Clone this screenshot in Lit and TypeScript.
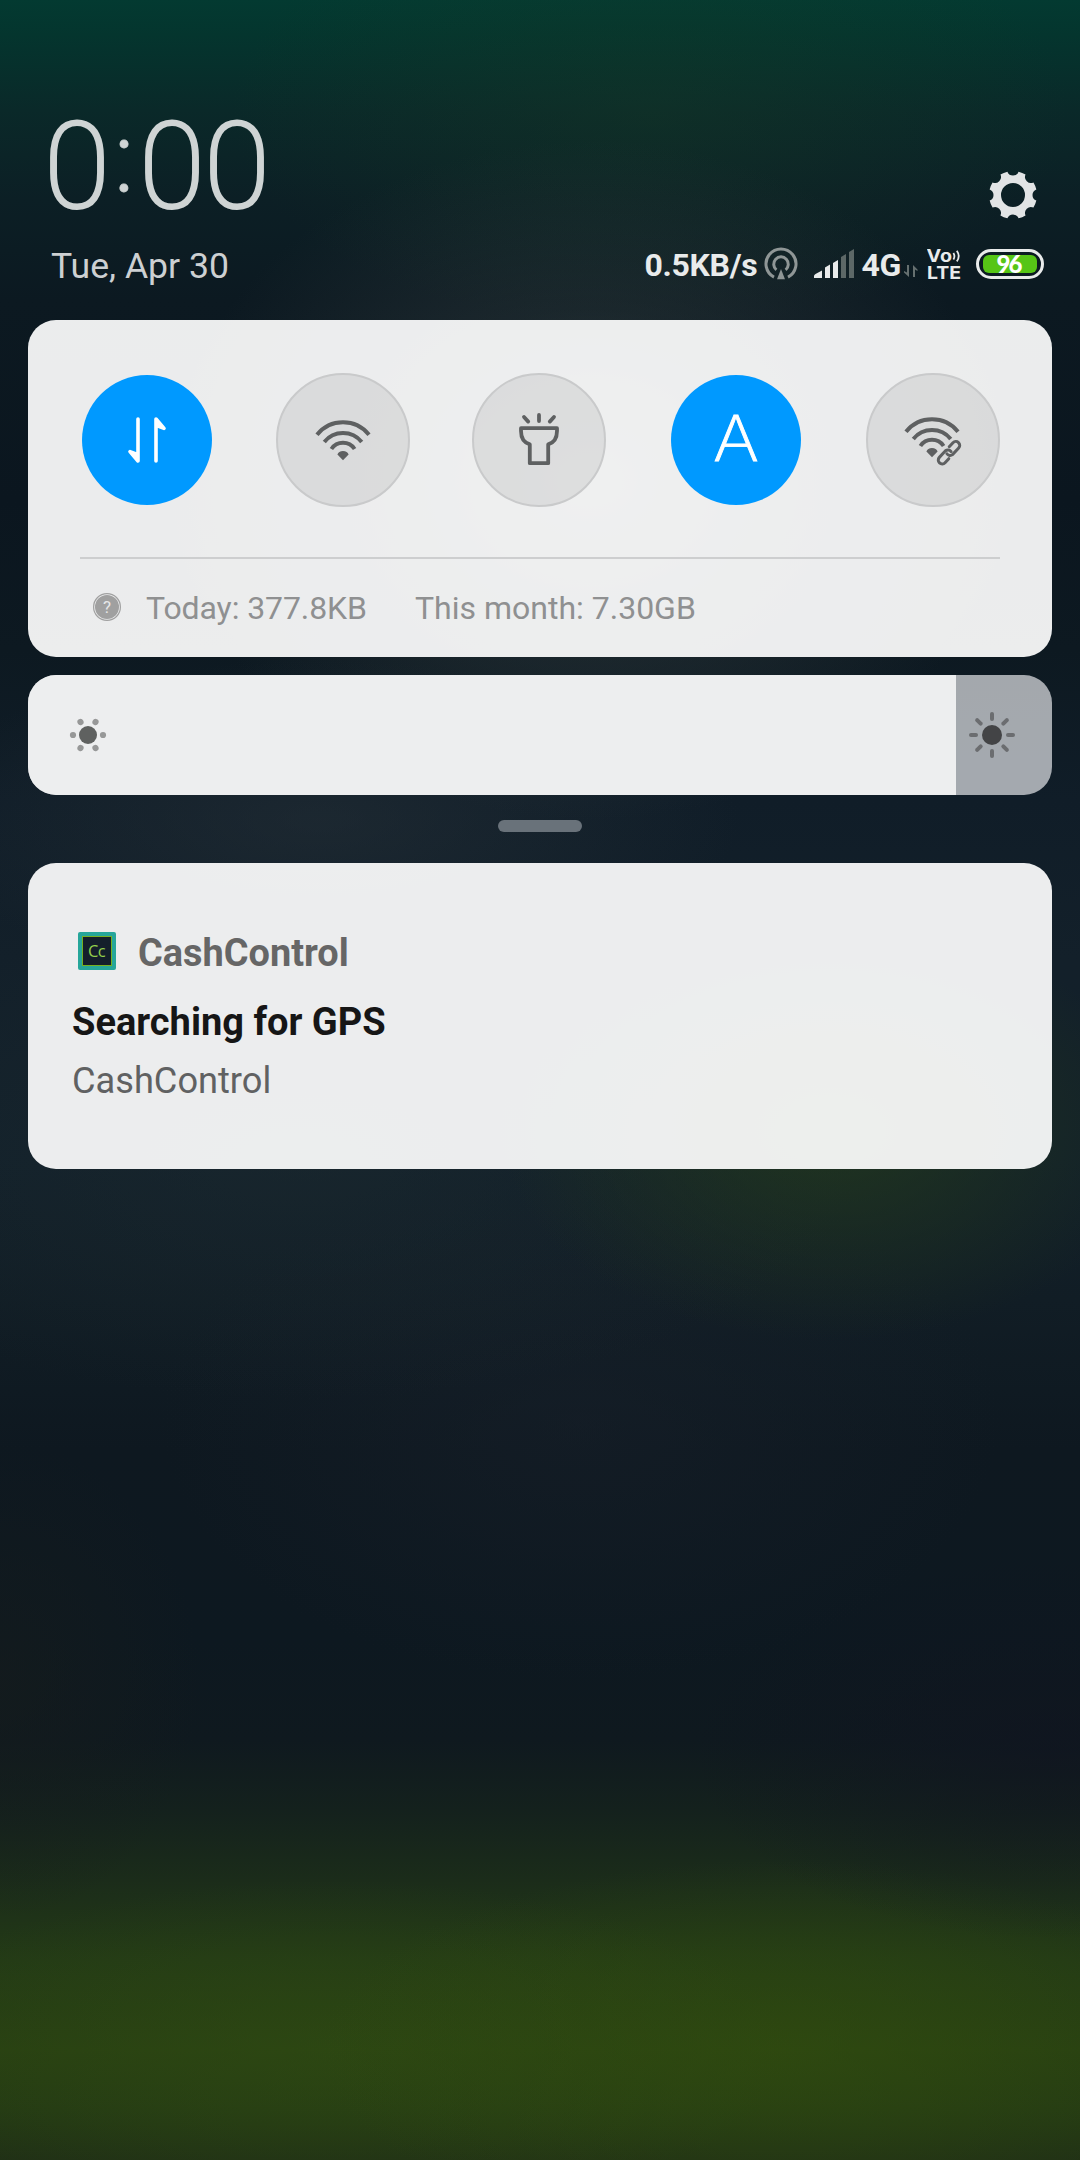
import { LitElement, html, css, svg } from "lit";
import { customElement, property } from "lit/decorators.js";

/** Outline of a cog with eight scalloped notches and a round hole. */
function gearPath(r: number, hole: number, halfNotch: number, notchR: number): string {
  const at = (deg: number) => {
    const a = ((deg - 90) * Math.PI) / 180;
    return `${(r * Math.cos(a)).toFixed(2)} ${(r * Math.sin(a)).toFixed(2)}`;
  };
  let d = `M${at(halfNotch)}`;
  for (let k = 0; k < 8; k++) {
    const next = (k + 1) * 45;
    d += `A${r} ${r} 0 0 1 ${at(next - halfNotch)}`;
    d += `A${notchR} ${notchR} 0 0 0 ${at(next + halfNotch)}`;
  }
  return `${d}ZM0 ${-hole}A${hole} ${hole} 0 1 0 0 ${hole}A${hole} ${hole} 0 1 0 0 ${-hole}Z`;
}

const wifi = svg`
  <g fill="none" stroke="#5e6061" stroke-width="4">
    <path d="M-26 -5.2A33.3 33.3 0 0 1 26 -5.2"/>
    <path d="M-18.7 2A24 24 0 0 1 18.7 2"/>
    <path d="M-11.6 9A14 14 0 0 1 11.6 9"/>
  </g>
  <path d="M-5.6 14.6Q-4.4 11.2 0 11Q4.4 11.2 5.6 14.6L0 20.2Z" fill="#5e6061"/>`;

const glyphs: Record<string, unknown> = {
  data: svg`<g fill="#fff" stroke="#fff" stroke-width="3.6" stroke-linejoin="round" stroke-linecap="round">
    <path d="M-9 -21V21L-17 11.6L-9 14.6"/><path d="M9 21V-21L17 -11.6L9 -14.6"/></g>`,
  wifi,
  torch: svg`<g fill="none" stroke="#5e6061" stroke-width="3.8" stroke-linejoin="round" stroke-linecap="round">
    <path d="M-18 -11.8H18V-9C18 -1.5 14.5 2.8 9.2 4.4V23.2H-9.2V4.4C-14.5 2.8 -18 -1.5 -18 -9Z"/>
    <path d="M0 -25V-19M-15 -23L-10.8 -18.4M15 -23L10.8 -18.4"/></g>`,
  auto: svg`<text class="auto" x="-23" y="20.5" textLength="46" lengthAdjust="spacingAndGlyphs">A</text>`,
  link: svg`<g transform="translate(-1 -3)">${wifi}</g>
    <g transform="translate(16 12.7) rotate(-47)" fill="none">
      <path d="M-14 -3.9H14V3.9H-14Z" stroke="#dadcdb" stroke-width="4"/>
      <g stroke="#5e6061" stroke-width="3" stroke-linecap="round">
        <path d="M-4.5 3.9H-10A3.9 3.9 0 0 1 -10 -3.9H-1A3.9 3.9 0 0 1 2.2 0.8"/>
        <path d="M4.5 -3.9H10A3.9 3.9 0 0 1 10 3.9H1A3.9 3.9 0 0 1 -2.2 -0.8"/>
      </g>
    </g>`,
};

@customElement("quick-toggle")
export class QuickToggle extends LitElement {
  @property() icon = "";
  @property({ type: Boolean }) on = false;

  static styles = css`
    :host { display: flex; align-items: center; justify-content: center; width: 134px; height: 134px; }
    .disc { box-sizing: border-box; width: 134px; height: 134px; border-radius: 50%;
      background: rgba(0, 0, 0, 0.075); border: 2px solid #c9cacb; display: flex; align-items: center; justify-content: center; }
    .disc.on { width: 130px; height: 130px; border: 0; background: #0099ff; }
    .auto { font: 200 63px Inter, sans-serif; fill: #fff; stroke: #fff; stroke-width: 0.8; }
  `;

  render() {
    return html`<div class="disc ${this.on ? "on" : ""}">
      <svg width="90" height="90" viewBox="-45 -45 90 90">${glyphs[this.icon]}</svg>
    </div>`;
  }
}

@customElement("status-icons")
export class StatusIcons extends LitElement {
  static styles = css`
    :host { display: flex; align-items: center; height: 40px; color: #e9ebeb; font: 700 32px/40px Roboto, sans-serif; }
    svg { display: block; }
    .rate, .net { padding-top: 2px; }
    .rate { letter-spacing: -0.3px; }
    .hotspot { margin-left: 7px; }
    .signal { margin-left: 16px; }
    .net { margin-left: 7px; letter-spacing: -0.3px; }
    .arrows { margin-left: 3px; }
    .volte { margin-left: 9px; }
    .volte text { font: 700 17.5px Inter, sans-serif; fill: #e9ebeb; }
    .battery { margin-left: 14px; box-sizing: border-box; width: 68px; height: 30px; border: 3px solid #e9ebeb;
      border-radius: 15px; padding: 3px 5px; }
    .charge { height: 18px; width: 54px; margin-left: -1px; border-radius: 6px; background: #56c516; color: #fff;
      display: flex; align-items: center; justify-content: center; font: 900 24px/18px Lato, sans-serif; letter-spacing: -2px; }
    .charge span { margin-left: -3px; }
  `;

  render() {
    return html`
      <span class="rate">0.5KB/s</span>
      <svg class="hotspot" width="34" height="34" viewBox="-17 -17 34 34" fill="none" stroke="#8f9696" stroke-width="3">
        <path d="M-7 13.2A15 15 0 1 1 7 13.2"/><path d="M-4.6 5.8A7.3 7.3 0 1 1 4.6 5.8"/>
        <path d="M0 5L4 15.2H-4Z" fill="#8f9696" stroke="none"/>
      </svg>
      <svg class="signal" width="40" height="32" viewBox="0 0 40 32" fill="#e9ebeb">
        <path d="M0 30V28Q0 26.8 1.5 26L8 22.5V30Z"/><path d="M11 30V19.5L16 16.6V30Z"/>
        <path d="M19 30V15L24 12V30Z"/>
        <path d="M27 30V9L32 6V30Z" fill="#5d6867"/><path d="M35 30V4L40 1V30Z" fill="#5d6867"/>
      </svg>
      <span class="net">4G</span>
      <svg class="arrows" width="14" height="32" viewBox="0 0 14 32" fill="#667070">
        <path d="M3 17H5V29L0 24.6V23L3 24.5Z"/><path d="M11 29H9V17L13.5 21.4V23L11 21.5Z"/>
      </svg>
      <svg class="volte" width="35" height="42" viewBox="0 0 35 42">
        <text x="-0.5" y="18.6" textLength="25.5" lengthAdjust="spacingAndGlyphs">Vo</text>
        <text x="0" y="35.6" textLength="34" lengthAdjust="spacingAndGlyphs">LTE</text>
        <path d="M26.4 10Q28.4 13.2 26.4 16.5M29.8 7.8Q33.6 13.2 29.8 18.4" fill="none" stroke="#e9ebeb" stroke-width="1.8"/>
      </svg>
      <div class="battery"><div class="charge"><span>96</span></div></div>
    `;
  }
}

@customElement("app-root")
export class AppRoot extends LitElement {
  static styles = css`
    :host { display: block; font-family: Roboto, sans-serif; }
    .screen {
      box-sizing: border-box; width: 1080px; height: 2160px; overflow: hidden; display: flex; flex-direction: column;
      background:
        radial-gradient(ellipse 420px 340px at 590px 480px, rgba(82, 92, 92, 0.62), rgba(60, 70, 70, 0.3) 50%, transparent),
        radial-gradient(ellipse 420px 220px at 650px 110px, rgba(24, 60, 38, 0.35), transparent),
        radial-gradient(ellipse 420px 160px at 320px 820px, rgba(44, 54, 60, 0.42), transparent),
        radial-gradient(ellipse 330px 210px at 830px 1130px, rgba(36, 58, 28, 0.78), transparent),
        radial-gradient(ellipse 560px 240px at 300px 1160px, rgba(32, 46, 50, 0.4), transparent),
        radial-gradient(ellipse 420px 260px at 580px 1420px, rgba(24, 32, 42, 0.5), transparent),
        radial-gradient(ellipse 200px 240px at 0 1680px, rgba(22, 28, 28, 0.6), transparent),
        radial-gradient(ellipse 360px 190px at 1050px 1750px, rgba(16, 20, 32, 0.65), transparent),
        radial-gradient(ellipse 460px 190px at 780px 2050px, rgba(50, 78, 14, 0.6), transparent),
        radial-gradient(ellipse 460px 170px at 330px 2050px, rgba(48, 76, 18, 0.55), transparent),
        linear-gradient(#033a31 0, #04352e 35px, #0a2929 110px, #0c1f25 200px, #0c1921 300px, #0b161f 500px, #0d1921 650px,
          #101d28 800px, #13202a 960px, #12202a 1160px, #111d25 1300px, #0e1820 1450px, #0d1820 1640px, #0f191f 1740px,
          #14211d 1810px, #1b2c1a 1880px, #233a16 1960px, #284012 2050px, #243a14 2110px, #203016 2160px);
    }
    .header { box-sizing: border-box; height: 320px; padding: 97px 36px 0 51px; }
    .top { display: flex; justify-content: space-between; height: 147px; }
    .clock { display: flex; align-items: baseline; height: 140px; line-height: 140px; font-size: 120px; font-weight: 200;
      color: #cfd4d4; margin-left: -7px; -webkit-text-stroke: 2.2px #cfd4d4; }
    .clock span { display: block; width: 65px; text-align: center; }
    .clock .colon { width: 30px; font-size: 98px; font-weight: 300; line-height: 100px; position: relative; top: -16px;
      -webkit-text-stroke: 0.8px #cfd4d4; }
    .gear { margin: 74px 7px 0 0; width: 48px; height: 48px; }
    .under { display: flex; justify-content: space-between; height: 40px; }
    .date { font-size: 35.6px; line-height: 40px; padding-top: 2px; color: #cdd0d2; }
    .card { box-sizing: border-box; margin: 0 28px; border-radius: 28px; background: rgba(255, 255, 255, 0.92); }
    .panel { height: 337px; padding: 53px 52px 0; }
    .toggles { display: grid; grid-template-columns: 196px 196px 197px 197px 134px; height: 184px; }
    .usage { border-top: 2px solid #cdcecf; display: flex; align-items: center; height: 96px; padding-left: 12px;
      font-size: 32px; color: #8f9091; }
    .usage span { padding-top: 2px; }
    .usage text { font: 400 17px Roboto, sans-serif; fill: #e6e7e8; }
    .today { margin-left: 24px; width: 269px; letter-spacing: -0.1px; }
    .slider { margin-top: 18px; height: 120px; overflow: hidden; background: rgba(252, 252, 255, 0.63); display: flex; }
    .level { width: 928px; background: #edeeef; display: flex; align-items: center; padding-left: 41px; box-sizing: border-box; }
    .rest { flex: 1; display: flex; align-items: center; padding-left: 12px; }
    .grip { flex: none; align-self: center; width: 84px; height: 12px; border-radius: 6px; background: #69727a; margin: 25px 0 31px; }
    .note { height: 306px; padding: 65px 44px 0; }
    .app { display: flex; align-items: center; height: 48px; padding-left: 6px; font-size: 37.9px; font-weight: 700; color: #666; }
    .app span { padding-top: 2px; }
    .badge { box-sizing: border-box; width: 38px; height: 38px; margin: -2px 22px 0 0; border-radius: 2px; background: #26a69a;
      padding: 4px; }
    .badge div { box-sizing: border-box; height: 30px; border: 1px solid #76b021; background: #141f2b; color: #93d04c;
      font: 400 16.5px/27px "Open Sans", sans-serif; text-align: center; letter-spacing: -0.6px; padding-right: 1px; }
    .title { margin-top: 17px; font-size: 38px; line-height: 58px; font-weight: 700; color: #161616; }
    .body { font-size: 36.2px; line-height: 60px; color: #606162; }
  `;

  private toggles = [
    { icon: "data", on: true },
    { icon: "wifi", on: false },
    { icon: "torch", on: false },
    { icon: "auto", on: true },
    { icon: "link", on: false },
  ];

  render() {
    return html`
      <div class="screen">
        <div class="header">
          <div class="top">
            <div class="clock"><span>0</span><span class="colon">:</span><span>0</span><span>0</span></div>
            <svg class="gear" viewBox="-24 -24 48 48"><path d=${gearPath(24, 12, 13.5, 6)} fill="#e2e4e5"/></svg>
          </div>
          <div class="under">
            <div class="date">Tue, Apr 30</div>
            <status-icons></status-icons>
          </div>
        </div>

        <div class="card panel">
          <div class="toggles">
            ${this.toggles.map((t) => html`<quick-toggle .icon=${t.icon} .on=${t.on}></quick-toggle>`)}
          </div>
          <div class="usage">
            <svg width="30" height="30" viewBox="-15 -15 30 30">
              <circle r="13.4" fill="none" stroke="#a0a0a0" stroke-width="1.2"/><circle r="12" fill="#a0a0a0"/>
              <text x="0" y="6" text-anchor="middle">?</text>
            </svg>
            <span class="today">Today: 377.8KB</span><span>This month: 7.30GB</span>
          </div>
        </div>

        <div class="card slider">
          <div class="level">
            <svg width="38" height="38" viewBox="-19 -19 38 38">
              <circle r="9" fill="#5f6160"/>
              ${[0, 60, 120, 180, 240, 300].map((a) => svg`<circle cx="15" r="3.1" fill="#979898" transform="rotate(${a})"/>`)}
            </svg>
          </div>
          <div class="rest">
            <svg width="48" height="48" viewBox="-24 -24 48 48">
              <circle r="10" fill="#434446"/>
              ${[0, 45, 90, 135, 180, 225, 270, 315].map(
                (a) => svg`<path d="M16 0H21" stroke="#6b6d70" stroke-width="4" stroke-linecap="round" transform="rotate(${a})"/>`
              )}
            </svg>
          </div>
        </div>

        <div class="grip"></div>

        <div class="card note">
          <div class="app"><div class="badge"><div>Cc</div></div><span>CashControl</span></div>
          <div class="title">Searching for GPS</div>
          <div class="body">CashControl</div>
        </div>
      </div>
    `;
  }
}
